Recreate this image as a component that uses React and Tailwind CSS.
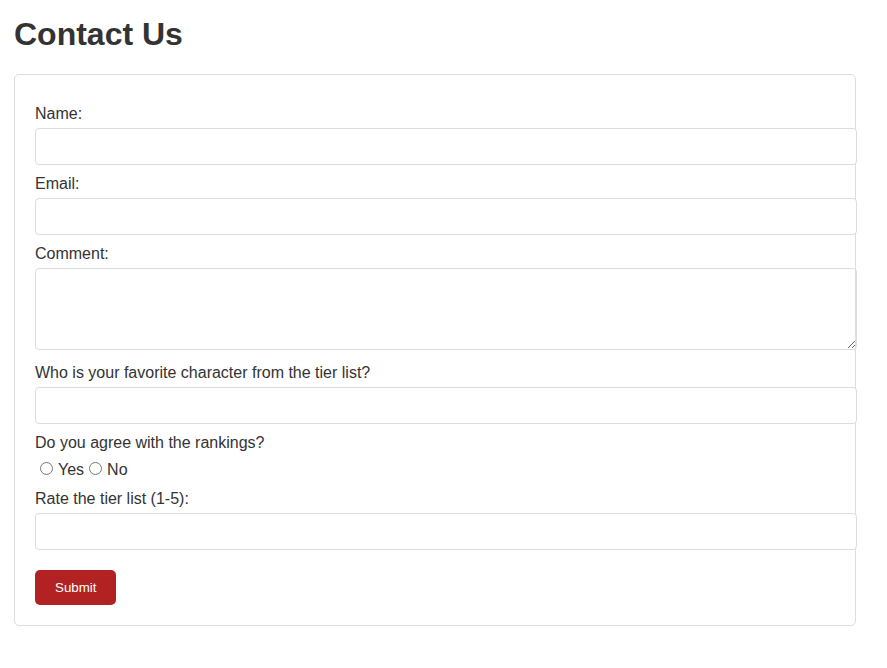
import React from 'react'

const Label = ({children}) => (
  <label className="block mt-[10px] mb-[5px] text-[16px] leading-[18px]">{children}</label>
)

const Field = () => (
  <input type="text" className="block w-[822px] h-[37px] px-[10px] border border-[#dcdcdc] rounded-[4px] bg-white text-[13.33px] outline-none" />
)

export default function App() {
  return (
    <div className="min-h-[668px] bg-white text-[#333] px-[14px] pt-[16px]" style={{fontFamily: '"Liberation Sans", Arial, sans-serif'}}>
      <h1 className="text-[32px] font-bold leading-[36px] mb-[22px]">Contact Us</h1>

      <form className="w-[842px] border border-[#dddddd] rounded-[5px] p-[20px]">
        <Label>Name:</Label>
        <Field />
        <Label>Email:</Label>
        <Field />
        <Label>Comment:</Label>
        <textarea className="block w-[822px] h-[82px] mb-[14px] px-[10px] py-[10px] border border-[#dcdcdc] rounded-[4px] text-[13.33px] outline-none resize-y" />
        <Label>Who is your favorite character from the tier list?</Label>
        <Field />
        <Label>Do you agree with the rankings?</Label>
        <div className="flex items-end h-[23px] pb-[1px] text-[16px] leading-[18px]">
          <input type="radio" name="agree" className="w-[13px] h-[13px] ml-[5px] mr-[5px] mb-[4px]" />
          <span>Yes</span>
          <input type="radio" name="agree" className="w-[13px] h-[13px] ml-[5px] mr-[5px] mb-[4px]" />
          <span>No</span>
        </div>
        <Label>Rate the tier list (1-5):</Label>
        <Field />
        <button type="button" className="mt-[20px] h-[35px] px-[20px] bg-[#b22222] text-white text-[13.33px] rounded-[5px]">Submit</button>
      </form>
    </div>
  )
}
